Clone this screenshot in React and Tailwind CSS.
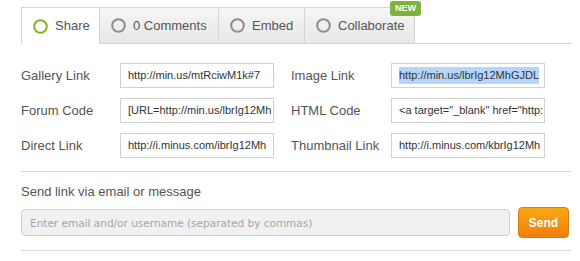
import { useState } from "react";

const tabs = [
  { label: "Share", width: "w-[79px]", active: true },
  { label: "0 Comments", width: "w-[119px]" },
  { label: "Embed", width: "w-[86px]" },
  { label: "Collaborate", width: "w-[110px]", badge: true },
];

// values trimmed to what fits in the box
const left = [
  { label: "Gallery Link", value: "http://min.us/mtRciwM1k#7" },
  { label: "Forum Code", value: "[URL=http://min.us/lbrIg12Mh" },
  { label: "Direct Link", value: "http://i.minus.com/ibrIg12Mh" },
];

const right = [
  { label: "Image Link", value: "http://min.us/lbrIg12MhGJDL", selected: true },
  { label: "HTML Code", value: '<a target="_blank" href="http:' },
  { label: "Thumbnail Link", value: "http://i.minus.com/kbrIg12Mh" },
];

const Circle = ({ active }) => (
  <svg width="15" height="15" viewBox="0 0 15 15" className="shrink-0">
    <circle
      cx="7.5"
      cy="7.5"
      r="6.3"
      fill="none"
      stroke={active ? "#78b51f" : "#8c8c8c"}
      strokeWidth="2"
    />
  </svg>
);

const Field = ({ label, value, selected, labelW }) => (
  <div className="flex items-center h-[25px]">
    <div className={`${labelW} text-[13px] text-[#555]`}>{label}</div>
    <div className="w-[154px] h-[25px] border border-[#d0d0d0] bg-white pl-[7px] pr-[2px] flex items-center overflow-hidden whitespace-nowrap text-[11px] text-[#333]">
      {selected ? <span className="bg-[#b5d5fc]">{value}</span> : value}
    </div>
  </div>
);

export default function App() {
  const [email, setEmail] = useState("");

  return (
    <div className="w-[580px] h-[261px] bg-white font-['Liberation_Sans',Arial,sans-serif]">
      <div className="pl-[21px] w-[571px] pt-[7px]">
        {/* TABS */}
        <div className="flex h-[37px]">
          {tabs.map((t, i) => (
            <div
              key={t.label}
              className={`relative ${t.width} flex items-center pl-[11px] gap-[7px] border-t border-r border-[#d4d4d4] text-[13px] text-[#555] ${
                i === 0 ? "border-l" : ""
              } ${
                t.active
                  ? "bg-white"
                  : "border-b bg-gradient-to-b from-[#f6f6f6] to-[#e7e7e7]"
              }`}
            >
              <Circle active={t.active} />
              <span>{t.label}</span>
              {t.badge && (
                <span className="absolute -top-[7px] left-[85px] w-[31px] h-[15px] rounded-[3px] bg-[#7bb33b] text-white text-[9px] font-bold flex items-center justify-center">
                  NEW
                </span>
              )}
            </div>
          ))}
          <div className="flex-1 border-b border-[#d4d4d4]" />
        </div>

        {/* LINKS */}
        <div className="flex gap-[17px] pt-[19px]">
          <div className="flex flex-col gap-[10px]">
            {left.map((f) => (
              <Field key={f.label} {...f} labelW="w-[99px]" />
            ))}
          </div>
          <div className="flex flex-col gap-[10px]">
            {right.map((f) => (
              <Field key={f.label} {...f} labelW="w-[100px]" />
            ))}
          </div>
        </div>

        <div className="mt-[13px] border-t border-[#dadada]" />

        {/* SEND */}
        <div className="pt-[11px] text-[13px] text-[#555] leading-[17px]">
          Send link via email or message
        </div>
        <div className="flex items-center mt-[7px] gap-[8px]">
          <input
            value={email}
            onChange={(e) => setEmail(e.target.value)}
            placeholder="Enter email and/or username (separated by commas)"
            className="w-[489px] h-[27px] rounded-[4px] border border-[#cfcfcf] bg-[#f1f1f1] pl-[8px] text-[10.5px] font-['DejaVu_Sans',sans-serif] text-[#333] placeholder-[#a4a4a4] outline-none"
          />
          <button className="w-[51px] h-[31px] rounded-[4px] border border-[#dc7c0c] bg-gradient-to-b from-[#f9a814] to-[#f37d0a] text-white text-[12px] font-bold">
            Send
          </button>
        </div>
        <div className="mt-[12px] border-t border-[#dadada]" />
      </div>
    </div>
  );
}
